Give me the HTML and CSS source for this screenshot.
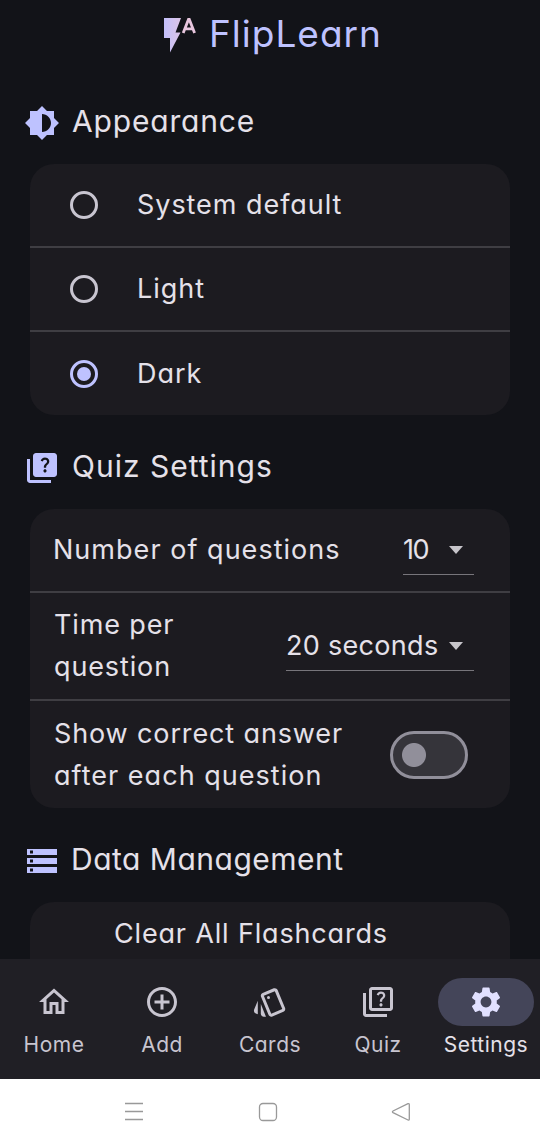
FILE: index.html
```html
<!DOCTYPE html>
<html lang="en">
<head>
<meta charset="utf-8">
<title>FlipLearn</title>
<link rel="stylesheet" href="styles.css">
</head>
<body>
<div class="app">
  <main class="content">
    <header class="brand">
      <svg class="brand-logo" viewBox="0 0 34 36">
        <defs><linearGradient id="g" x1="0" y1="0" x2="1" y2="0"><stop offset="0" stop-color="#c3c0fb"/><stop offset="1" stop-color="#dcc4e6"/></linearGradient></defs>
        <path fill="url(#g)" d="M1 1h17l-5.500 14.500h5L7 35.500V21H1z"/>
        <path fill="none" stroke="#e8c6de" stroke-width="2.800" d="M20.200 16L25.500 2.500h.8L31.600 16M22 11.800h8"/>
      </svg>
      <h1 class="brand-name">FlipLearn</h1>
    </header>

    <h2 class="heading heading-appearance">
      <svg class="icon" viewBox="0 0 24 24"><path d="M20 15.310L23.310 12 20 8.690V4h-4.690L12 .69 8.690 4H4v4.690L.69 12 4 15.310V20h4.690L12 23.310 15.310 20H20v-4.690zM12 18V6c3.310 0 6 2.690 6 6s-2.690 6-6 6z"/></svg>
      <span>Appearance</span>
    </h2>
    <section class="card">
      <label class="option"><span class="radio"></span><span class="t-system">System default</span></label>
      <label class="option"><span class="radio"></span><span class="t-light">Light</span></label>
      <label class="option"><span class="radio checked"></span><span class="t-dark">Dark</span></label>
    </section>

    <h2 class="heading heading-quiz">
      <svg class="icon" viewBox="0 0 24 24"><path d="M4 6H2v14c0 1.100.9 2 2 2h14v-2H4V6z"/><path d="M20 2H8c-1.100 0-2 .9-2 2v12c0 1.100.9 2 2 2h12c1.100 0 2-.9 2-2V4c0-1.100-.9-2-2-2zm-5.990 13c-.59 0-1.050-.47-1.050-1.050 0-.59.47-1.040 1.050-1.040.59 0 1.040.45 1.040 1.040-.01.58-.45 1.050-1.040 1.050zm2.500-6.170c-.63.93-1.230 1.210-1.560 1.810-.13.24-.18.4-.18 1.180h-1.520c0-.41-.06-1.080.26-1.650.41-.73 1.180-1.160 1.630-1.800.48-.68.21-1.940-1.140-1.940-.88 0-1.320.67-1.500 1.230l-1.370-.57C11.510 5.960 12.520 5 13.990 5c1.230 0 2.080.56 2.510 1.260.37.61.58 1.730.01 2.570z"/></svg>
      <span>Quiz Settings</span>
    </h2>
    <section class="card">
      <div class="row row-short"><span class="t-number">Number of questions</span><span class="select select-count"><span>10</span><i class="caret"></i></span></div>
      <div class="row row-tall"><span class="t-time">Time per<br>question</span><span class="select select-time"><span>20 seconds</span><i class="caret"></i></span></div>
      <div class="row row-tall"><span class="t-show">Show correct answer<br><span class="t-after">after each question</span></span><span class="switch"></span></div>
    </section>

    <h2 class="heading heading-data">
      <svg class="icon" viewBox="0 0 24 24"><path d="M2 20h20v-4H2v4zm2-3h2v2H4v-2zM2 4v4h20V4H2zm4 3H4V5h2v2zm-4 7h20v-4H2v4zm2-3h2v2H4v-2z"/></svg>
      <span>Data Management</span>
    </h2>
    <section class="card card-data"><span class="t-clear">Clear All Flashcards</span></section>
  </main>

  <nav class="tabs">
    <a class="tab tab-home"><span class="pill"><svg class="icon" viewBox="0 0 24 24"><path d="M12 5.690l5 4.500V18h-2v-6H9v6H7v-7.810l5-4.500M12 3L2 12h3v8h6v-6h2v6h6v-8h3L12 3z"/></svg></span><span>Home</span></a>
    <a class="tab tab-add"><span class="pill"><svg class="icon" viewBox="0 0 24 24"><path d="M13 7h-2v4H7v2h4v4h2v-4h4v-2h-4V7zm-1-5C6.480 2 2 6.480 2 12s4.480 10 10 10 10-4.480 10-10S17.520 2 12 2zm0 18c-4.410 0-8-3.590-8-8s3.590-8 8-8 8 3.590 8 8-3.590 8-8 8z"/></svg></span><span>Add</span></a>
    <a class="tab tab-cards"><span class="pill"><svg class="icon" viewBox="0 0 24 24"><path d="M2.530 19.650l1.340.56v-9.030l-2.430 5.860c-.41 1.020.08 2.190 1.090 2.610zm19.500-3.700L17.070 3.980c-.31-.75-1.040-1.210-1.810-1.230-.26 0-.53.04-.79.15L7.100 5.950c-.75.31-1.210 1.030-1.230 1.800-.01.27.04.54.15.8l4.960 11.970c.31.76 1.050 1.220 1.830 1.230.26 0 .52-.05.77-.15l7.360-3.050c1.020-.42 1.510-1.590 1.090-2.600zm-9.200 3.800L7.870 7.790l7.350-3.040h.01l4.950 11.950-7.350 3.050z"/><circle cx="11" cy="9" r="1"/><path d="M5.880 19.750c0 1.100.9 2 2 2h1.450l-3.450-8.340v6.340z"/></svg></span><span>Cards</span></a>
    <a class="tab tab-quiz"><span class="pill"><svg class="icon" viewBox="0 0 24 24"><path d="M4 6H2v14c0 1.100.9 2 2 2h14v-2H4V6zm16-4H8c-1.100 0-2 .9-2 2v12c0 1.100.9 2 2 2h12c1.100 0 2-.9 2-2V4c0-1.100-.9-2-2-2zm0 14H8V4h12v12z"/><path d="M14.010 15c-.59 0-1.050-.47-1.050-1.050 0-.59.47-1.040 1.050-1.040.59 0 1.040.45 1.040 1.040-.01.58-.45 1.050-1.040 1.050zm2.500-6.170c-.63.93-1.230 1.210-1.560 1.810-.13.24-.18.4-.18 1.180h-1.520c0-.41-.06-1.080.26-1.650.41-.73 1.180-1.160 1.630-1.800.48-.68.21-1.940-1.140-1.940-.88 0-1.320.67-1.500 1.230l-1.370-.57C11.510 5.960 12.520 5 13.990 5c1.230 0 2.080.56 2.510 1.260.37.61.58 1.730.01 2.570z"/></svg></span><span>Quiz</span></a>
    <a class="tab tab-settings active"><span class="pill"><svg class="icon" viewBox="0 0 24 24"><path d="M19.140 12.940c.04-.3.06-.61.06-.94 0-.32-.02-.64-.07-.94l2.030-1.580c.18-.14.23-.41.12-.61l-1.920-3.320c-.12-.22-.37-.29-.59-.22l-2.390.96c-.5-.38-1.030-.7-1.620-.94l-.36-2.540c-.04-.24-.24-.41-.48-.41h-3.840c-.24 0-.43.17-.47.41l-.36 2.540c-.59.24-1.130.57-1.620.94l-2.390-.96c-.22-.08-.47 0-.59.22L2.740 8.870c-.12.21-.08.47.12.61l2.030 1.580c-.05.3-.09.63-.09.94s.02.64.07.94l-2.030 1.580c-.18.14-.23.41-.12.61l1.920 3.320c.12.22.37.29.59.22l2.390-.96c.5.38 1.030.7 1.620.94l.36 2.540c.05.24.24.41.48.41h3.840c.24 0 .44-.17.47-.41l.36-2.540c.59-.24 1.130-.56 1.620-.94l2.390.96c.22.08.47 0 .59-.22l1.920-3.320c.12-.22.07-.47-.12-.61l-2.010-1.580zM12 15.600c-1.980 0-3.600-1.620-3.600-3.600s1.620-3.600 3.600-3.600 3.600 1.620 3.600 3.600-1.620 3.600-3.600 3.600z"/></svg></span><span>Settings</span></a>
  </nav>

  <footer class="system-bar">
    <svg viewBox="0 0 22 22"><path d="M2 2.500h18M2 10.500h18M2 18.500h18"/></svg>
    <svg viewBox="0 0 22 22"><rect x="2.500" y="2.500" width="17" height="17" rx="3.500"/></svg>
    <svg viewBox="0 0 22 22"><path d="M18 2.700L3 10q-1.200.8 0 1.600L18 19q1.300.4 1.300-1V3.700q0-1.300-1.300-1z"/></svg>
  </footer>
</div>
</body>
</html>
```
FILE: styles.css
```css
* { box-sizing: border-box; }
body {
  margin: 0;
  background: #121318;
  color: #e5e1e9;
  font-family: Inter, "Noto Sans", sans-serif;
  font-feature-settings: "cv11", "calt" 0;
}
.app { height: 1145px; display: flex; flex-direction: column; overflow: hidden; }
.content { height: 959px; flex: none; overflow: hidden; padding: 0 30px; }
.brand { height: 68px; display: flex; justify-content: center; gap: 12px; padding: 17px 0 0 5px; }
.brand-logo { width: 34px; height: 36px; }
.brand-name { margin: 0; font-size: 37px; line-height: 34px; font-weight: 400; color: #bec2ff; letter-spacing: 1px; }
.icon { width: 36px; height: 36px; flex: none; fill: currentColor; fill-rule: evenodd; }
.heading { display: flex; align-items: center; gap: 12px; height: 36px; margin: 0 0 0 -6px; font-size: 30px; font-weight: 400; white-space: nowrap; letter-spacing: .5px; }
.heading .icon { color: #bec2ff; }
.heading > span { padding-bottom: 4px; }
.heading-appearance { margin-top: 37px; letter-spacing: .83px; }
.heading-quiz { margin-top: 35px; letter-spacing: 1px; }
.heading-data { margin-top: 35px; gap: 11px; }
.card { margin-top: 23px; background: #1c1b20; border-radius: 24px; font-size: 27px; line-height: 42px; white-space: nowrap; }
.option { height: 84px; display: flex; align-items: center; padding-left: 40px; gap: 39px; border-bottom: 2px solid #3f3e43; letter-spacing: .95px; }
.option:last-child { height: 83px; }
.option:last-child, .row:last-child { border-bottom: 0; }
.radio { width: 28px; height: 28px; border: 3px solid #c8c5d0; border-radius: 50%; padding: 4px; }
.radio.checked { border-color: #bec2ff; background: #bec2ff content-box; }
.row { display: flex; align-items: center; justify-content: space-between; padding: 0 36px 0 24px; border-bottom: 2px solid #3f3e43; letter-spacing: .87px; }
.row-short { height: 84px; padding-left: 23px; }
.t-number, .t-after { letter-spacing: 1.030px; }
.row-tall { height: 108px; }
.row-tall:last-child { height: 107px; }
.select { display: flex; align-items: center; justify-content: space-between; height: 50px; border-bottom: 1px solid #77757b; padding-right: 10px; letter-spacing: .3px; }
.select-count { width: 71px; letter-spacing: -1.500px; }
.select-time { width: 188px; }
.caret { margin-right: 1px; border: 7px solid transparent; border-top: 8px solid #c7c5ca; border-bottom: 0; }
.switch { width: 78px; height: 48px; margin-right: 6px; border: 3px solid #918f9a; border-radius: 24px; background: #35343a radial-gradient(circle at 21px 21px, #918f9a 11.500px, transparent 12.500px); }
.card-data { height: 90px; padding: 11px 84px; letter-spacing: .83px; }
.tabs { height: 120px; flex: none; background: #201f25; color: #c8c5d0; display: grid; grid-template-columns: repeat(5, 108px); padding-top: 19px; font-size: 21px; }
.tab { display: flex; flex-direction: column; align-items: center; gap: 5px; line-height: 27px; letter-spacing: .5px; }
.pill { width: 96px; height: 48px; border-radius: 24px; display: grid; place-items: center; }
.active { color: #e5e1e9; }
.active .pill { background: #444559; color: #e1e0ff; }
.system-bar { height: 66px; flex: none; background: #fff; display: flex; align-items: center; gap: 112px; padding-left: 123px; }
.system-bar svg { width: 22px; height: 22px; fill: none; stroke: #999; stroke-width: 1.300; }
.system-bar svg:last-child { margin-left: -1px; }
```
